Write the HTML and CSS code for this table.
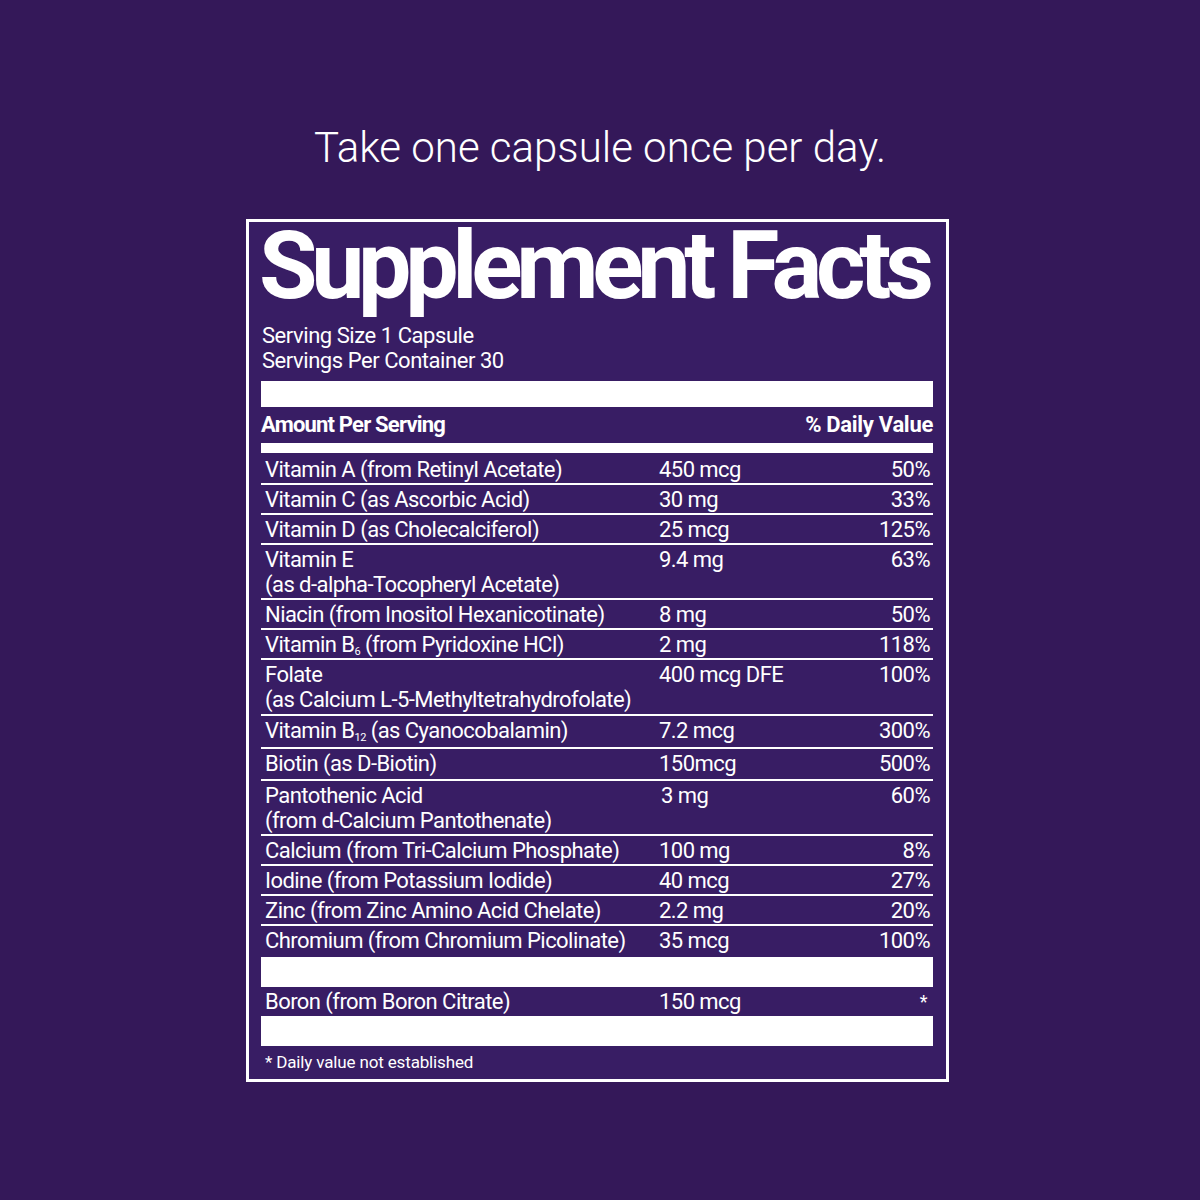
FILE: index.html
```html
<!DOCTYPE html>
<html lang="en">
<head>
<meta charset="utf-8">
<title>Supplement Facts</title>
<link rel="stylesheet" href="styles.css">
</head>
<body>
<main class="page">
  <p class="intro">Take one capsule once per day.</p>
  <section class="facts">
    <h1 class="facts-title">Supplement Facts</h1>
    <div class="serving">
      <div>Serving Size 1 Capsule</div>
      <div>Servings Per Container 30</div>
    </div>
    <div class="bar bar-thick"></div>
    <div class="head-row"><span>Amount Per Serving</span><span class="head-dv">% Daily Value</span></div>
    <div class="bar bar-thin"></div>
    <div class="rows">
      <div class="row"><div class="name">Vitamin A (from Retinyl Acetate)</div><div class="amt">450 mcg</div><div class="dv">50%</div></div>
      <div class="row"><div class="name">Vitamin C (as Ascorbic Acid)</div><div class="amt">30 mg</div><div class="dv">33%</div></div>
      <div class="row"><div class="name">Vitamin D (as Cholecalciferol)</div><div class="amt">25 mcg</div><div class="dv">125%</div></div>
      <div class="row"><div class="name">Vitamin E<br>(as d-alpha-Tocopheryl Acetate)</div><div class="amt">9.4 mg</div><div class="dv">63%</div></div>
      <div class="row"><div class="name">Niacin (from Inositol Hexanicotinate)</div><div class="amt">8 mg</div><div class="dv">50%</div></div>
      <div class="row"><div class="name">Vitamin B<sub>6</sub> (from Pyridoxine HCl)</div><div class="amt">2 mg</div><div class="dv">118%</div></div>
      <div class="row row-pad1"><div class="name">Folate<br>(as Calcium L-5-Methyltetrahydrofolate)</div><div class="amt">400 mcg DFE</div><div class="dv">100%</div></div>
      <div class="row row-sub"><div class="name">Vitamin B<sub>12</sub> (as Cyanocobalamin)</div><div class="amt">7.2 mcg</div><div class="dv">300%</div></div>
      <div class="row row-pad2"><div class="name">Biotin (as D-Biotin)</div><div class="amt">150mcg</div><div class="dv">500%</div></div>
      <div class="row"><div class="name">Pantothenic Acid<br>(from d-Calcium Pantothenate)</div><div class="amt amt-nudge">3 mg</div><div class="dv">60%</div></div>
      <div class="row"><div class="name">Calcium (from Tri-Calcium Phosphate)</div><div class="amt">100 mg</div><div class="dv">8%</div></div>
      <div class="row"><div class="name">Iodine (from Potassium Iodide)</div><div class="amt">40 mcg</div><div class="dv">27%</div></div>
      <div class="row"><div class="name">Zinc (from Zinc Amino Acid Chelate)</div><div class="amt">2.2 mg</div><div class="dv">20%</div></div>
      <div class="row row-last"><div class="name">Chromium (from Chromium Picolinate)</div><div class="amt">35 mcg</div><div class="dv">100%</div></div>
    </div>
    <div class="bar bar-block"></div>
    <div class="row row-plain"><div class="name">Boron (from Boron Citrate)</div><div class="amt">150 mcg</div><div class="dv dv-star">*</div></div>
    <div class="bar bar-block"></div>
    <p class="footnote">* Daily value not established</p>
  </section>
</main>
</body>
</html>
```

FILE: styles.css
```css
html, body {
  margin: 0;
  padding: 0;
}

body {
  background: #341859;
  color: #ffffff;
  font-family: Roboto, "Liberation Sans", Arial, sans-serif;
  width: 1200px;
  height: 1200px;
  overflow: hidden;
}

.page {
  padding-top: 123px;
}

.intro {
  margin: 0;
  text-align: center;
  font-size: 42px;
  font-weight: 300;
  line-height: 50px;
}

.facts {
  box-sizing: border-box;
  width: 703px;
  margin: 46px 0 0 246px;
  border: 3px solid #ffffff;
  background: #381d64;
  padding: 0 13px 0 12px;
}

.facts-title {
  margin: 0;
  padding-top: 4px;
  font-size: 95px;
  font-weight: 700;
  line-height: 80px;
  letter-spacing: -6.3px;
  text-indent: -2px;
  white-space: nowrap;
}

.serving {
  margin-top: 17px;
  font-size: 22px;
  line-height: 25px;
  letter-spacing: -0.45px;
  padding-left: 1px;
}

.bar {
  background: #ffffff;
}

.bar-thick {
  margin-top: 8px;
  height: 26px;
}

.bar-thin {
  height: 10px;
}

.bar-block {
  height: 30px;
}

.head-row {
  display: flex;
  justify-content: space-between;
  font-size: 22px;
  font-weight: 700;
  line-height: 25px;
  letter-spacing: -0.8px;
  padding: 5px 0 6px;
}

.head-dv {
  letter-spacing: -0.3px;
}

.row {
  display: grid;
  grid-template-columns: 394px 1fr auto;
  border-top: 2px solid #ffffff;
  padding: 2px 3px 1px 4px;
  font-size: 22px;
  line-height: 25px;
  letter-spacing: -0.55px;
}

.rows .row:first-child {
  border-top: 0;
  padding-top: 4px;
}

.row-pad1 {
  padding-bottom: 2px;
}

.row-sub {
  padding-bottom: 4px;
}

.row-pad2 {
  padding-bottom: 3px;
}

.row-last {
  padding-bottom: 4px;
}

.row-plain {
  border-top: 0;
  padding-top: 2px;
  padding-bottom: 2px;
}

.amt-nudge {
  padding-left: 2px;
}

.dv {
  text-align: right;
}

.dv-star {
  font-size: 18px;
  padding-right: 3px;
}

sub {
  font-size: 11px;
  line-height: 0;
  vertical-align: -3px;
}

.footnote {
  margin: 0;
  padding: 6px 0 7px 4px;
  font-size: 17px;
  line-height: 20px;
  letter-spacing: -0.15px;
}
```
